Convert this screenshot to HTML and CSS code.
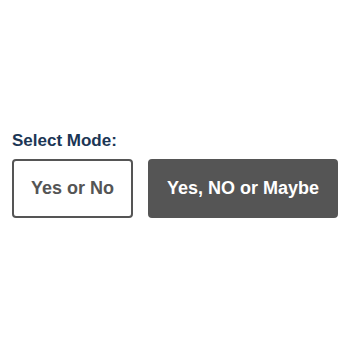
FILE: index.html
```html
<!DOCTYPE html>
<html>
<head>
<meta charset="utf-8">
<link rel="stylesheet" href="styles.css">
</head>
<body>
<div class="page">
  <div class="label">Select Mode:</div>
  <div class="modes">
    <button class="mode mode-outline">Yes or No</button>
    <button class="mode mode-filled">Yes, NO or Maybe</button>
  </div>
</div>
</body>
</html>
```
FILE: styles.css
```css
html, body {
  margin: 0;
  padding: 0;
  background: #ffffff;
}
.page {
  box-sizing: border-box;
  padding: 131px 12px 0;
  display: flex;
  flex-direction: column;
  font-family: "Liberation Sans", Arial, sans-serif;
}
.label {
  font-size: 17px;
  font-weight: bold;
  color: #1b3655;
  line-height: 20px;
  margin-bottom: 8px;
}
.modes {
  display: flex;
  gap: 15px;
}
.mode {
  font-family: "Liberation Sans", Arial, sans-serif;
  font-size: 18px;
  font-weight: bold;
  height: 59px;
  border-radius: 4px;
  padding: 0;
  margin: 0;
  cursor: pointer;
}
.mode-outline {
  width: 121px;
  background: #ffffff;
  color: #555555;
  border: 2px solid #555555;
}
.mode-filled {
  width: 190px;
  background: #555555;
  color: #ffffff;
  border: 2px solid #555555;
}
```
